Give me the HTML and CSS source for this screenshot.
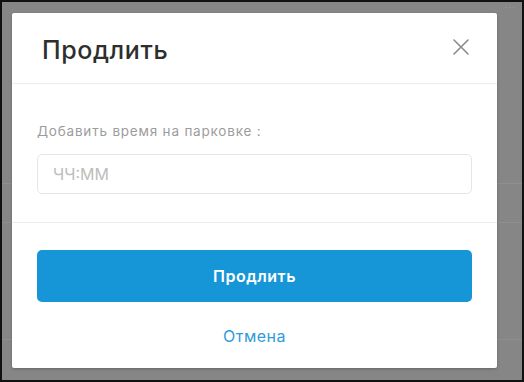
FILE: index.html
```html
<!DOCTYPE html>
<html lang="ru">
<head>
  <meta charset="UTF-8">
  <meta name="viewport" content="width=device-width, initial-scale=1.0">
  <title>Продлить</title>
  <link rel="stylesheet" href="styles.css">
</head>
<body>
  <div class="frame">
    <div class="page">
      <div class="row row-top"><span class="dots">&middot;&middot;&middot;</span></div>
      <div class="row row-mid"></div>
      <div class="row row-low"></div>
    </div>

    <div class="modal">
      <div class="modal-header">
        <h2>Продлить</h2>
        <button class="close" aria-label="Закрыть">
          <svg width="16" height="16" viewBox="0 0 16 16">
            <path d="M1 1 L15 15 M15 1 L1 15" stroke="#8c8c8c" stroke-width="1.6" stroke-linecap="round" fill="none"/>
          </svg>
        </button>
      </div>
      <div class="modal-body">
        <label for="time">Добавить время на парковке :</label>
        <input type="text" id="time" placeholder="ЧЧ:ММ">
      </div>
      <div class="modal-footer">
        <button class="primary">Продлить</button>
        <a href="#" class="cancel">Отмена</a>
      </div>
    </div>
  </div>
</body>
</html>
```

FILE: styles.css
```css
body {
  margin: 0;
  font-family: Inter, "Noto Sans", sans-serif;
  background: #000;
}
.frame {
  position: relative;
  box-sizing: border-box;
  width: 524px;
  height: 382px;
  border: 2px solid #111;
  background: #868686;
  overflow: hidden;
}
.row {
  border-bottom: 1px solid #8f8f8f;
}
.row-top {
  height: 181px;
  position: relative;
}
.row-mid {
  height: 38px;
}
.row-low {
  height: 116px;
}
.dots {
  position: absolute;
  right: 6px;
  top: 1px;
  color: #9a9a9a;
  font-size: 10px;
  line-height: 8px;
  letter-spacing: 1px;
}
.modal {
  position: absolute;
  left: 10px;
  top: 11px;
  width: 485px;
  height: 355px;
  background: #fff;
  border-radius: 2px;
  box-shadow: 0 1px 3px rgba(0,0,0,0.25);
  display: flex;
  flex-direction: column;
}
.modal-header {
  height: 70px;
  display: flex;
  align-items: center;
  justify-content: space-between;
  padding: 0 28px 0 30px;
  border-bottom: 1px solid #ededed;
}
.modal-header h2 {
  margin: 0;
  font-size: 25px;
  font-weight: 500;
  letter-spacing: 0.6px;
  color: #2e2e2e;
  padding-top: 3px;
}
.close {
  background: none;
  border: none;
  padding: 0;
  width: 16px;
  height: 16px;
  cursor: pointer;
  margin-bottom: 2px;
}
.modal-body {
  padding: 38px 25px 28px;
  border-bottom: 1px solid #ededed;
  display: flex;
  flex-direction: column;
}
.modal-body label {
  font-size: 13.5px;
  line-height: 18px;
  letter-spacing: 0.8px;
  color: #9c9c9c;
  margin-bottom: 14px;
}
.modal-body input {
  height: 40px;
  box-sizing: border-box;
  border: 1px solid #e6e6e6;
  border-radius: 5px;
  padding: 0 15px;
  font-family: inherit;
  font-size: 16px;
  color: #333;
}
.modal-body input::placeholder {
  color: #bdbdbd;
}
.modal-footer {
  padding: 27px 25px 0;
  display: flex;
  flex-direction: column;
  align-items: center;
}
.primary {
  width: 100%;
  height: 52px;
  border: none;
  border-radius: 5px;
  background: #1696d7;
  color: #fff;
  font-family: inherit;
  font-size: 16px;
  font-weight: 600;
  letter-spacing: 0.5px;
  cursor: pointer;
}
.cancel {
  margin-top: 24px;
  font-size: 16px;
  line-height: 20px;
  letter-spacing: 0.5px;
  color: #2f9bdb;
  text-decoration: none;
}
```
